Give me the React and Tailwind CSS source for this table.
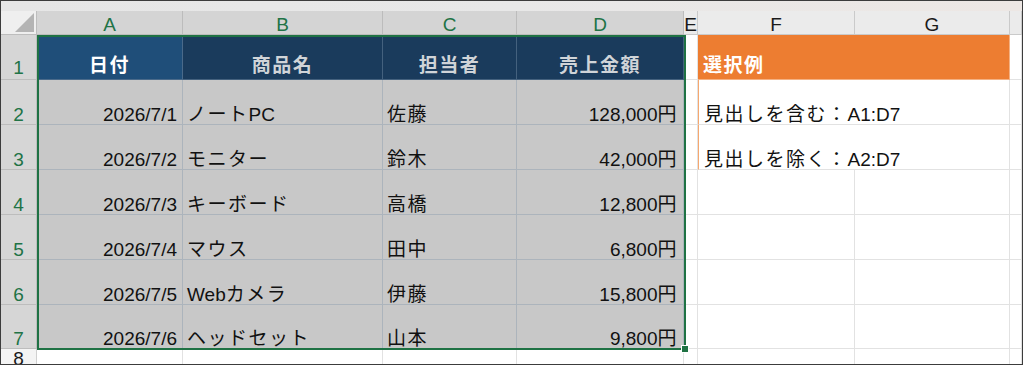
import React from 'react';

// Runs of Japanese text get a little extra tracking so kana/kanji sit wider than the Latin digits.
const CJK = /([\u3000-\u30ff\u4e00-\u9fff\uff00-\uffef]+)/;

const Txt = ({ text }) =>
  text.split(CJK).map((part, i) =>
    CJK.test(part) ? (
      <span key={i} className="tracking-[1.5px]">
        {part}
      </span>
    ) : (
      part
    )
  );

const sales = [
  ['2026/7/1', 'ノートPC', '佐藤', '128,000円'],
  ['2026/7/2', 'モニター', '鈴木', '42,000円'],
  ['2026/7/3', 'キーボード', '高橋', '12,800円'],
  ['2026/7/4', 'マウス', '田中', '6,800円'],
  ['2026/7/5', 'Webカメラ', '伊藤', '15,800円'],
  ['2026/7/6', 'ヘッドセット', '山本', '9,800円'],
];

const notes = {
  0: '見出しを含む：A1:D7',
  1: '見出しを除く：A2:D7',
};

const colHeads = [
  { label: 'A', on: true },
  { label: 'B', on: true },
  { label: 'C', on: true },
  { label: 'D', on: true },
  { label: 'E', on: false },
  { label: 'F', on: false },
  { label: 'G', on: false },
  { label: '', on: false },
];

const base = 'flex items-end whitespace-nowrap leading-[19px] border-b border-r';
const plain = `${base} bg-white border-[#e2e2e2]`;
const picked = `${base} bg-[#c8c8c8] border-[#acb4bc] text-[#111]`;

export default function App() {
  return (
    <div
      className="w-[1023px] h-[365px] overflow-hidden border border-[#3c3c3c] bg-white text-[19px] text-[#111]"
      style={{ fontFamily: '"Liberation Sans", "Noto Sans CJK JP", sans-serif' }}
    >
      {/* toolbar strip above the sheet */}
      <div className="h-[10px] bg-gradient-to-r from-[#e6e6e6] via-[#e8e8e8] to-[#ede7e4]" />

      <div className="relative grid grid-cols-[36px_146px_200px_134px_167px_14px_157px_155px_12px] grid-rows-[24px_45px_45px_45px_45px_45px_45px_44px_20px]">
        {/* column headers */}
        <div className="relative bg-[#efefef] border-r border-b border-[#bdbdbd]">
          <svg className="absolute right-[2px] bottom-[2px]" width="19" height="19" viewBox="0 0 19 19">
            <polygon points="19,0 19,19 0,19" fill="#b4b4b4" />
          </svg>
        </div>
        {colHeads.map((c, i) => (
          <div
            key={i}
            className={
              c.on
                ? 'flex items-end justify-center leading-[19px] bg-[#d4d4d4] border-r border-b border-[#bcbcbc] text-[#217346]'
                : 'flex items-end justify-center leading-[19px] bg-[#ebebeb] border-r border-b border-[#cacaca] text-[#1a1a1a]'
            }
          >
            {c.label}
          </div>
        ))}

        {/* row 1: table headings + the orange note title */}
        <div className="flex items-end justify-center pb-[2px] leading-[19px] bg-[#d6d6d6] border-r border-b border-[#bdbdbd] text-[#217346]">
          1
        </div>
        <div className="flex items-end justify-center pb-[4px] leading-[19px] bg-[#1f4e79] border-r border-b border-[#4a6a8a] font-bold text-white">
          <Txt text="日付" />
        </div>
        {['商品名', '担当者', '売上金額'].map((h) => (
          <div
            key={h}
            className="flex items-end justify-center pb-[4px] leading-[19px] bg-[#1a3b5c] border-r border-b border-[#44617e] font-bold text-[#d0d4d8]"
          >
            <Txt text={h} />
          </div>
        ))}
        <div className={plain} />
        <div className="col-span-2 flex items-end pl-[5px] pb-[4px] leading-[19px] bg-[#ed7d31] border-b border-r border-[#f4b183] font-bold text-white">
          <Txt text="選択例" />
        </div>
        <div className={plain} />

        {/* data rows */}
        {sales.map((r, i) => (
          <React.Fragment key={r[0]}>
            <div className="flex items-end justify-center leading-[19px] bg-[#d6d6d6] border-r border-b border-[#bdbdbd] text-[#217346]">
              {i + 2}
            </div>
            <div className={`${picked} justify-end pr-[5px]`}>{r[0]}</div>
            <div className={`${picked} pl-[4px]`}>
              <Txt text={r[1]} />
            </div>
            <div className={`${picked} pl-[4px]`}>
              <Txt text={r[2]} />
            </div>
            <div className={`${picked} justify-end pr-[5px]`}>
              <Txt text={r[3]} />
            </div>
            <div className={plain} />
            {notes[i] ? (
              <div className={`${plain} col-span-2 pl-[5px] border-l border-l-[#f6a86f]`}>
                <Txt text={notes[i]} />
              </div>
            ) : (
              <>
                <div className={plain} />
                <div className={plain} />
              </>
            )}
            <div className={plain} />
          </React.Fragment>
        ))}

        {/* row 8, cut off by the window edge */}
        <div className="flex items-start justify-center leading-[19px] bg-[#f4f4f4] border-r border-b border-[#d0d0d0] text-[#1a1a1a]">
          8
        </div>
        {[0, 1, 2, 3, 4, 5, 6, 7].map((k) => (
          <div key={k} className={plain} />
        ))}

        {/* selection frame A1:D7 */}
        <div className="pointer-events-none absolute left-[36px] top-[24px] w-[649px] h-[315px] border-2 border-[#1f7244]">
          <div className="absolute -right-[5px] -bottom-[5px] w-[8px] h-[8px] bg-[#1f7244] border border-white" />
        </div>
      </div>
    </div>
  );
}
